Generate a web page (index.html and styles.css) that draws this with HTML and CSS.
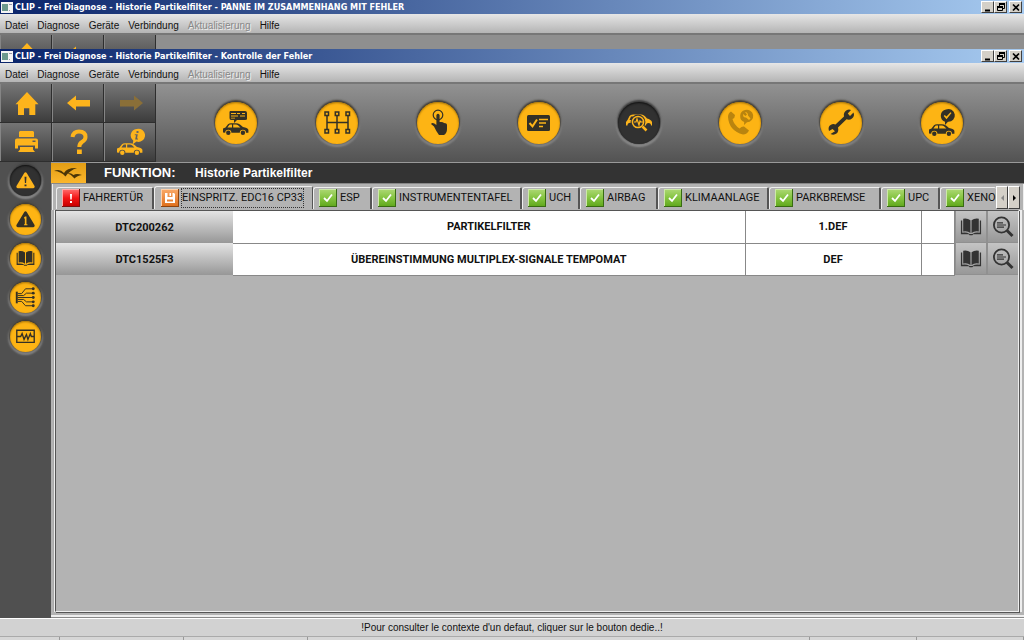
FILE: index.html
```html
<!DOCTYPE html>
<html lang="de">
<head>
<meta charset="utf-8">
<title>CLIP - Frei Diagnose</title>
<link rel="stylesheet" href="styles.css">
</head>
<body>
<svg class="defs" aria-hidden="true">
  <defs>
    <symbol id="car" viewBox="0 0 26 12">
      <path fill-rule="evenodd" d="M0 9.5V5.5L2.5 4.4 5 1.2Q6 .2 8 .2H13Q15 .2 17 1.5L20 4Q24.4 4.6 25.4 6.8V9.8H23A3.1 3.1 0 0 0 16.8 9.8H8.4A3.1 3.1 0 0 0 2.2 9.8zM6.4 1.8 4.4 4.5H9V1.5H7.4zM10.2 1.5V4.5H17.4L15 2.2Q14 1.5 13 1.5z"/>
      <circle cx="5.3" cy="9.7" r="2.2"/><circle cx="19.9" cy="9.7" r="2.2"/>
    </symbol>
    <symbol id="home" viewBox="0 0 28 28"><path d="M14 3 25.5 15.3H22.3V26H16.3V19.3H11V26H5V15.3H2.5z"/></symbol>
    <symbol id="left" viewBox="0 0 28 28"><path d="M2 14 11 6.5V11H25V17.500H11V21.500z"/></symbol>
    <symbol id="book" viewBox="0 0 24 20">
      <path d="M3.500 1Q8 .2 11.400 2.500V16.500Q8 14 3.500 15zM20.500 1Q16 .2 12.600 2.500V16.500Q16 14 20.500 15z"/>
      <path d="M1 3H2.400V16.300Q7 15.500 10.500 17.600H13.500Q17 15.500 21.600 16.300V3H23V18H14.500L13.500 19H10.500L9.500 18H1z"/>
    </symbol>
    <symbol id="lens" viewBox="0 0 22 22">
      <g fill="none" stroke="currentColor"><circle cx="9.500" cy="9" r="7.600" stroke-width="1.800"/><path d="M5 6.800H11M5 9H14M5 11.200H12" stroke-width="1.200"/><path d="M15 14.500 20.500 20" stroke-width="3"/></g>
    </symbol>
    <linearGradient id="green" x2="0" y2="1"><stop stop-color="#a9d66f"/><stop offset=".5" stop-color="#84c440"/><stop offset="1" stop-color="#62a91e"/></linearGradient>
    <linearGradient id="red" x2="0" y2="1"><stop stop-color="#ff6565"/><stop offset=".5" stop-color="#f31414"/><stop offset="1" stop-color="#c80000"/></linearGradient>
    <linearGradient id="orange" x2="0" y2="1"><stop stop-color="#f9a765"/><stop offset="1" stop-color="#df701c"/></linearGradient>
    <symbol id="ok" viewBox="0 0 18 18"><path fill="#386b12" d="M0 0H18V18H0z"/><path fill="#cde9a9" d="M0 0H17V17H0z"/><path fill="url(#green)" d="M1 1H17V17H1z"/><path fill="none" stroke="#fff" stroke-width="1.800" d="M5 9 8 12 13 5.500"/></symbol>
    <symbol id="err" viewBox="0 0 18 18"><path fill="#7d1010" d="M0 0H18V18H0z"/><path fill="#ffaaaa" d="M0 0H17V17H0z"/><path fill="url(#red)" d="M1 1H17V17H1z"/><path fill="#fff" d="M8 5H10L9.700 10.500H8.300zM8 12H10V14H8z"/></symbol>
    <symbol id="disk" viewBox="0 0 18 18"><path fill="#8d430e" d="M0 0H18V18H0z"/><path fill="#ffd0a8" d="M0 0H17V17H0z"/><path fill="url(#orange)" d="M1 1H17V17H1z"/><path fill="#fff" fill-rule="evenodd" d="M4 4H13L14 5V14H4zM6.500 4V8H11.500V4zM6 10.500V12.500H12V10.500z"/><path fill="#fff" d="M8.500 4H10V7H8.500z"/></symbol>
    <symbol id="restore" viewBox="0 0 10 9"><path fill="none" stroke="#000" d="M3.500 3V.500H8.500V5.500H7M1.500 3.500H6.500V7.500H1.500z"/><path d="M3 0H9V2H3zM1 3H7V5H1z"/></symbol>
    <symbol id="close" viewBox="0 0 10 9"><path fill="none" stroke="#000" stroke-width="1.700" d="M2 1.500 8 7.500M8 1.500 2 7.500"/></symbol>
    <symbol id="min" viewBox="0 0 10 9"><path d="M2 6.500H7V8.500H2z"/></symbol>
    <symbol id="app" viewBox="0 0 12 11"><path fill="#f4f4f4" d="M0 0H12V11H0z"/><path fill="#6c9a8e" d="M1 2H7V9H1z"/><path fill="#99a" d="M8 2H11V3H8zM8 8H9V9H8z"/></symbol>
  </defs>
</svg>

<div class="window">
  <header class="titlebar">
    <svg class="app"><use href="#app"/></svg>
    <span class="caption">CLIP - Frei Diagnose - Historie Partikelfilter - PANNE IM ZUSAMMENHANG MIT FEHLER</span>
    <button class="wbtn" aria-label="Minimieren"><svg><use href="#min"/></svg></button>
    <button class="wbtn" aria-label="Wiederherstellen"><svg><use href="#restore"/></svg></button>
    <button class="wbtn last" aria-label="Schließen"><svg><use href="#close"/></svg></button>
  </header>
  <nav class="menu"><button>Datei</button><button>Diagnose</button><button>Geräte</button><button>Verbindung</button><button disabled>Aktualisierung</button><button>Hilfe</button></nav>
  <div class="toolbar sliver" aria-hidden="true">
    <div class="cells">
      <span class="cell"><svg><use href="#home"/></svg></span>
      <span class="cell"><svg><use href="#left"/></svg></span>
      <span class="cell"></span>
    </div>
  </div>
</div>

<div class="window front">
  <header class="titlebar">
    <svg class="app"><use href="#app"/></svg>
    <span class="caption">CLIP - Frei Diagnose - Historie Partikelfilter - Kontrolle der Fehler</span>
    <button class="wbtn" aria-label="Minimieren"><svg><use href="#min"/></svg></button>
    <button class="wbtn" aria-label="Wiederherstellen"><svg><use href="#restore"/></svg></button>
    <button class="wbtn last" aria-label="Schließen"><svg><use href="#close"/></svg></button>
  </header>
  <nav class="menu"><button>Datei</button><button>Diagnose</button><button>Geräte</button><button>Verbindung</button><button disabled>Aktualisierung</button><button>Hilfe</button></nav>

  <div class="toolbar">
    <div class="cells">
      <button class="cell" aria-label="Start"><svg><use href="#home"/></svg></button>
      <button class="cell" aria-label="Zurück"><svg><use href="#left"/></svg></button>
      <button class="cell dim" aria-label="Weiter" disabled><svg viewBox="0 0 28 28"><path d="M26 14 17 6.500V11H3V17.500H17V21.500z"/></svg></button>
      <button class="cell" aria-label="Drucken"><svg viewBox="0 0 28 28"><path d="M7 3H20L21 4V9H6V4z"/><path fill-rule="evenodd" d="M4 10.500H23Q25 10.500 25 12.500V20.500H22V17.500H5V20.500H2V12.500Q2 10.500 4 10.500zM19.500 12.500V14H22.500V12.500z"/><path d="M7 19H20V21.500L22 24H5L7 21.500z"/></svg></button>
      <button class="cell" aria-label="Hilfe"><svg viewBox="0 0 28 28"><path fill="none" stroke="currentColor" stroke-width="4" d="M7.500 9Q8.500 3.500 14 3.500 20.500 3.500 20.500 9 20.500 12 17 14 14.300 15.800 14.300 19"/><path d="M12 21.500H16.800V26H12z"/></svg></button>
      <button class="cell" aria-label="Fahrzeuginfo"><svg viewBox="0 0 28 28"><use href="#car" x="0" y="15" width="26" height="12"/><path fill-rule="evenodd" d="M19.500 1A6.600 6.600 0 1 1 19.500 13.600L15.500 16.500 16.300 12.800A6.600 6.600 0 0 1 19.500 1zM19.500 3V5H21.500V3zM17.800 6.300V7.300H19L18.200 11.500H21V10.500H20L20.800 6.300z"/></svg></button>
    </div>
    <div class="modes">
      <button class="round" aria-label="Kundenbeanstandung"><svg viewBox="-21 -21 42 42"><use href="#car" x="-13" y="0" width="26" height="12"/><path fill-rule="evenodd" d="M-6-12H9Q11-12 11-10V-4Q11-3 9-3H1L-2 0V-3H-5Q-6.500-3-6.500-5V-11zM-5-10V-9H0V-10zM1-10V-9H4V-10zM6-10V-9H9V-10zM-5-7.500V-6.500H2V-7.500zM4-7.500V-6.500H9V-7.500zM-5-5.200V-4.500H-1V-5.200z"/></svg></button>
      <button class="round" aria-label="Baugruppen"><svg viewBox="-21 -21 42 42"><g fill="none" stroke="currentColor" stroke-width="1.500"><path d="M-10-7V7M0-7V7M11-7V7M-10-.5H11"/><path d="M-12-11H-8.500V-7.500H-12zM-1.700-11H1.800V-7.500H-1.700zM9-11H12.500V-7.500H9zM-12 6.500H-8.500V10H-12zM-1.700 6.500H1.800V10H-1.700zM9 6.500H12.500V10H9z"/></g></svg></button>
      <button class="round" aria-label="Auswahl"><svg viewBox="-21 -21 42 42"><circle cy="-8" r="4.800" fill="none" stroke="currentColor" stroke-width="1.200"/><path d="M-1.600-8Q0-10.500 1.600-8V-1Q5-1.500 6 0 9 0 9 2V6Q9 10 6 12H1Q-2 8-4 3.500L-7 1Q-5.500-1.500-1.600 2z"/></svg></button>
      <button class="round" aria-label="Prüfliste"><svg viewBox="-21 -21 42 42"><rect x="-12" y="-8" width="23" height="16" rx="1.500"/><path fill="none" stroke="#fdb518" stroke-width="2" d="M-9.500 0-6.500 3.300-2-3.500"/><path fill="none" stroke="#fdb518" stroke-width="1.300" d="M0-3.500H9M0 0H7M0 3.500H4"/></svg></button>
      <button class="round active" aria-label="Diagnose"><svg viewBox="-21 -21 42 42"><path fill-rule="evenodd" d="M-13-1-11.500-3-9.500-7Q-8.500-8.500-6-8.500H2Q5-8.500 8-4.500 12-3.500 13-1V2.500H12A2.500 2.500 0 0 0 7 2.500H-6A2.500 2.500 0 0 0-11.500 2.500H-13zM-8-6.500-9.500-3H-7L-5.500-6.500z"/><circle cx="-1" cy="-1" r="5.600" fill="#333" stroke="#333" stroke-width="3.600"/><circle cx="-1" cy="-1" r="5.600" fill="none" stroke="currentColor" stroke-width="1.500"/><path fill="none" stroke="currentColor" stroke-width="1.200" d="M-5-1H-3L-2-4 0 2 1-2 2-1H4"/><path stroke="currentColor" stroke-width="2.500" d="M3.500 3.500 7.500 7.500"/></svg></button>
      <button class="round faded" aria-label="Hotline"><svg viewBox="-21 -21 42 42"><path d="M-12-6Q-12-10-9-11.500L-5-8Q-5-5-7.500-4-6 2-.5 5.500 2 3 4 3.500L9 7.500Q7 11.500 3 11.500-11 8-12-6z"/><path fill-rule="evenodd" d="M5-13A6.300 6.300 0 1 1 7-.7L4 2 4.200-1A6.300 6.300 0 0 1 5-13zM5-11 7-8.500 5.500-7 3-9Q3-5 6-5.500L9-3 10.500-4.500 8-7.500Q8-11 5-11z"/></svg></button>
      <button class="round" aria-label="Reparatur"><svg viewBox="-21 -21 42 42"><path d="M-6 8.200-8.500 6-12 8Q-13.500 3.500-10 1.700-8 .5-5.500 1.500L3-6.500Q2-11 6-13 8-14 10-13L6.800-9.500 9-7 12.500-10.500Q14-7 11-4.500 8.500-2.500 5.500-3.700L-3 4.500Q-2 8.500-4.500 10.500-7 12.500-10.500 11z"/></svg></button>
      <button class="round" aria-label="Abschlusskontrolle"><svg viewBox="-21 -21 42 42"><use href="#car" x="-13" y="1" width="26" height="12"/><path fill-rule="evenodd" d="M4-13.500A6.400 6.400 0 1 1 6-1.200L3 2V-1.200A6.400 6.400 0 0 1 4-13.500zM1.700-7 4.500-3.800 9.500-10 8.500-10.700 4.500-6.500 2.700-8z"/></svg></button>
    </div>
  </div>

  <div class="body">
    <aside class="side">
      <button class="round small active" aria-label="Fehler"><svg viewBox="-16 -16 32 32"><path fill-rule="evenodd" d="M0-8.500Q.8-8.500 1.400-7.500L9.500 6Q9.500 8 8 8H-8Q-9.500 8-9.500 6L-1.400-7.500Q-.8-8.500 0-8.500zM-1-4-.6 2.500H.6L1-4zM-1 4V6H1V4z"/></svg></button>
      <button class="round small" aria-label="Hinweis"><svg viewBox="-16 -16 32 32"><path fill-rule="evenodd" d="M0-8.500Q.8-8.500 1.400-7.500L9.500 6Q9.500 8 8 8H-8Q-9.500 8-9.500 6L-1.400-7.500Q-.8-8.500 0-8.500zM-1.500-2V-1H-.7V5H-1.500V6H2V5H1V-3H-.5z"/></svg></button>
      <button class="round small" aria-label="Dokumentation"><svg viewBox="-16 -16 32 32"><use href="#book" x="-10" y="-9" width="20" height="18"/></svg></button>
      <button class="round small" aria-label="Schaltplan"><svg viewBox="-16 -16 32 32"><path fill="none" stroke="currentColor" d="M-8-4H-4L0-9H8M-8-2H-2L1-4.500H8M-8 0H8M-8 2H-2L1 4.500H8M-8 4H-4L0 8.500H8"/><path d="M-10-6H-8V6H-10z"/><circle cx="8" cy="-9" r="1.500"/><circle cx="8" cy="-4.500" r="1.500"/><circle cx="8" r="1.500"/><circle cx="8" cy="4.500" r="1.500"/><circle cx="8" cy="8.500" r="1.500"/></svg></button>
      <button class="round small" aria-label="Messung"><svg viewBox="-16 -16 32 32"><path fill="none" stroke="currentColor" stroke-width="1.400" d="M-9-6.500H9V6H-9zM-9 0H-5L-3.500-3-1.500 3 1-2 2.500 3 5-3 6 0H9"/></svg></button>
    </aside>

    <main class="content">
      <div class="function">
        <svg class="logo" viewBox="0 0 35 20"><path fill="#4a3508" d="M3 8Q9 5.500 13 10 16 4.500 26 5 19 7 14.500 13.500 9.500 8 3 8zM16 10Q20 9.500 22.500 12 25.500 10 31 12 26 12.500 23.500 15.500 20.500 11.500 16 10z"/></svg>
        <span class="key">FUNKTION:</span><h1>Historie Partikelfilter</h1>
      </div>
      <div class="tabs" role="tablist">
        <button role="tab" class="tab"><svg><use href="#err"/></svg><span>FAHRERTÜR</span></button>
        <button role="tab" class="tab selected" aria-selected="true"><svg><use href="#disk"/></svg><span>EINSPRITZ. EDC16 CP33</span></button>
        <button role="tab" class="tab"><svg><use href="#ok"/></svg><span>ESP</span></button>
        <button role="tab" class="tab"><svg><use href="#ok"/></svg><span>INSTRUMENTENTAFEL</span></button>
        <button role="tab" class="tab"><svg><use href="#ok"/></svg><span>UCH</span></button>
        <button role="tab" class="tab"><svg><use href="#ok"/></svg><span>AIRBAG</span></button>
        <button role="tab" class="tab"><svg><use href="#ok"/></svg><span>KLIMAANLAGE</span></button>
        <button role="tab" class="tab"><svg><use href="#ok"/></svg><span>PARKBREMSE</span></button>
        <button role="tab" class="tab"><svg><use href="#ok"/></svg><span>UPC</span></button>
        <button role="tab" class="tab cut"><svg><use href="#ok"/></svg><span>XENON</span></button>
        <button class="scroll" aria-label="Nach links" disabled><svg viewBox="0 0 5 8"><path d="M4 1V7L1 4z"/></svg></button>
        <button class="scroll" aria-label="Nach rechts"><svg viewBox="0 0 5 8"><path d="M1 1V7L4 4z"/></svg></button>
      </div>
      <div class="panel">
        <table class="faults">
          <colgroup><col class="c-code"><col><col class="c-state"><col class="c-flag"><col class="c-act"></colgroup>
          <tr><th scope="row">DTC200262</th><td>PARTIKELFILTER</td><td>1.DEF</td><td></td>
            <td class="acts"><div><button aria-label="Dokumentation"><svg><use href="#book"/></svg></button><button aria-label="Kontext"><svg><use href="#lens"/></svg></button></div></td></tr>
          <tr><th scope="row">DTC1525F3</th><td>ÜBEREINSTIMMUNG MULTIPLEX-SIGNALE TEMPOMAT</td><td>DEF</td><td></td>
            <td class="acts"><div><button aria-label="Dokumentation"><svg><use href="#book"/></svg></button><button aria-label="Kontext"><svg><use href="#lens"/></svg></button></div></td></tr>
        </table>
      </div>
    </main>
  </div>

  <footer class="status">!Pour consulter le contexte d'un defaut, cliquer sur le bouton dedie..!</footer>
  <div class="fields"><span></span><span></span><span></span><span></span><span></span><span></span></div>
</div>
</body>
</html>
```

FILE: styles.css
```css
* { box-sizing: border-box; }

body {
  margin: 0;
  height: 100vh;
  display: flex;
  flex-direction: column;
  overflow: hidden;
  background: #b3b3b3;
  color: #111;
  font-family: Roboto, "Liberation Sans", sans-serif;
  font-size: 11px;
}

.defs { position: absolute; width: 0; height: 0; }

button {
  margin: 0;
  padding: 0;
  border: 0;
  background: none;
  color: inherit;
  font: inherit;
}

svg { display: block; fill: currentColor; }

/* Windows */
.front { flex: 1; min-height: 0; display: flex; flex-direction: column; }

.titlebar {
  display: flex;
  align-items: center;
  height: 14px;
  padding: 0 2px 0 1px;
  background: linear-gradient(90deg, #0a246a, #a6caf0);
  color: #fff;
}

.app { width: 12px; height: 11px; }

.caption {
  flex: 1;
  margin-left: 2px;
  font: bold 9px/14px "DejaVu Sans Condensed", "DejaVu Sans", sans-serif;
  white-space: nowrap;
}

.wbtn {
  display: grid;
  place-items: center;
  width: 13px;
  height: 12px;
  background: #d4d0c8;
  border: 1px solid;
  border-color: #fff #404040 #404040 #fff;
  color: #000;
}

.wbtn svg { width: 10px; height: 9px; }
.last { margin-left: 2px; }

.menu {
  display: flex;
  gap: 9px;
  height: 21px;
  padding: 2px 5px 0;
  background: linear-gradient(#e6e6e6, #b4b4b4);
  border-bottom: 2px solid #777;
  font: 10px/19px "Liberation Sans", sans-serif;
}

.menu button:disabled { color: #888; text-shadow: 1px 1px #eee; }

/* Toolbar */
.toolbar {
  display: flex;
  height: 78px;
  background: linear-gradient(#929292, #535353);
}

.sliver { height: 14px; overflow: hidden; background: #8f8f8f; }

.cells {
  display: grid;
  grid-template-columns: repeat(3, 52px);
  grid-auto-rows: 39px;
  color: #fdb41c;
}

.cell {
  display: grid;
  place-items: center;
  padding-left: 2px;
  background: linear-gradient(#757575, #3c3c3c);
  border: solid #2e2e2e;
  border-width: 0 1px 1px 0;
  box-shadow: inset 1px 0 #858585;
}

.cell svg { width: 28px; height: 28px; }
.dim { color: #8a6f38; }

.modes {
  flex: 1;
  display: flex;
  align-items: center;
  padding: 0 32px 0 30px;
  justify-content: space-around;
}

.round {
  display: grid;
  place-items: center;
  width: 42px;
  height: 42px;
  border-radius: 50%;
  background: #fdb414;
  color: #333026;
  box-shadow: 0 -1px 2px 1px #3e3a32, 0 1px 2px 2px #858585, inset 0 1px 2px #a87408;
}

.round svg { width: 42px; height: 42px; }
.active { background: #313131; color: #fdb41c; box-shadow: 0 -1px 2px 1px #3a3a3a, 0 1px 2px 2px #8c8c8c, inset 0 1px 2px #111; }
.faded { color: #b9840f; }

/* Main area */
.body { flex: 1; min-height: 0; display: flex; }

.side {
  display: flex;
  flex-direction: column;
  gap: 8px;
  align-items: center;
  width: 51px;
  padding-top: 3px;
  background: #505050;
}

.small { width: 31px; height: 31px; place-content: center; }
.small svg { width: 31px; height: 31px; }

.content {
  flex: 1;
  min-width: 0;
  display: flex;
  flex-direction: column;
  background: #b3b3b3;
  border-bottom: 1px solid #888;
  box-shadow: inset 0 -2px #eee;
}

.function {
  display: flex;
  align-items: center;
  height: 21px;
  background: #333;
  border-top: 1px solid #999;
  color: #fff;
  font: bold 13px/20px "Liberation Sans", sans-serif;
}

.logo { width: 35px; height: 20px; background: linear-gradient(#e29d14, #fbb62c); }
.key { width: 109px; padding-left: 18px; }
.function h1 { margin: 0; font-size: 12px; line-height: 18px; }

.tabs {
  display: grid;
  grid-template-columns: 98px 159px 59px 150px 58px 78px 111px 112px 59px minmax(56px, 1fr) 12px 12px;
  height: 27px;
  padding: 2px 4px 1px 5px;
  border-top: 1px solid #888;
  box-shadow: inset 1px 0 #888, inset 2px 0 #eee, inset -1px 0 #eee;
}

.tab {
  display: flex;
  align-items: center;
  gap: 3px;
  margin-top: 1px;
  padding: 0 0 1px 5px;
  overflow: hidden;
  background: #b3b3b3;
  border: solid;
  border-width: 1px 2px 0 1px;
  border-color: #eee #555 #555 #eee;
  border-radius: 3px 2px 0 0;
  white-space: nowrap;
}

.tab svg { flex: none; width: 18px; height: 18px; }
.tab span { line-height: 17px; padding-bottom: 1px; }
.selected { margin-top: 0; padding-left: 6px; border-right-width: 1px; }
.selected span { outline: 1px dotted #333; }
.cut { border-right: 0; }

.scroll {
  display: grid;
  place-items: center;
  background: #d4d0c8;
  border: 1px solid;
  border-color: #fff #404040 #404040 #fff;
  color: #000;
}

.scroll svg { width: 5px; height: 8px; }
.scroll:disabled { color: #888; }

.panel {
  flex: 1;
  min-height: 0;
  margin: 0 5px 5px 4px;
  border: 1px solid #555;
  border-right-color: #eee;
  border-bottom-color: #eee;
  box-shadow: -1px 0 #eee, -2px 0 #aaa, 1px 1px #555, 3px 0 #eee;
}

.faults {
  width: 100%;
  table-layout: fixed;
  border-collapse: collapse;
  text-align: center;
  font-weight: bold;
}

.c-code { width: 177px; }
.c-state { width: 176px; }
.c-flag { width: 33px; }
.c-act { width: 64px; }

.faults tr { height: 32px; }
.faults th { padding: 0; background: linear-gradient(#e4e4e4, #979797); }
.faults td { padding: 0; background: #fff; border: solid #888; border-width: 0 1px 1px 0; }
.faults td.acts { background: #909090; border: 0; }
.acts div { display: grid; grid-template-columns: 1fr 1fr; gap: 2px; height: 32px; padding: 0 0 1px 1px; }
.acts button { display: grid; place-items: center; color: #333; background: linear-gradient(#c4c4c4, #989898); }
.acts svg { width: 22px; height: 22px; }

/* Status area */
.status {
  height: 19px;
  background: #d2d2d2;
  border-top: 1px solid #fff;
  border-bottom: 1px solid #aaa;
  text-align: center;
  font: 10px/18px "Liberation Sans", sans-serif;
}

.fields {
  display: grid;
  grid-template-columns: 60fr 124fr 124fr 502fr 107fr 107fr;
  height: 3px;
  background: #d6d6d6;
}

.fields span { border-right: 1px solid #999; }
```
